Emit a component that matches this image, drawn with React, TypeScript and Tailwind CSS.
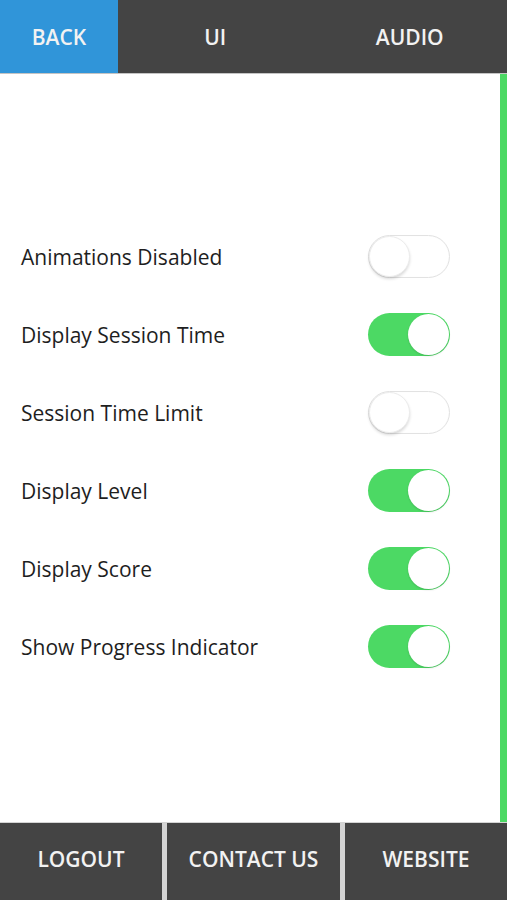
const settings = [
  { label: "Animations Disabled", on: false },
  { label: "Display Session Time", on: true },
  { label: "Session Time Limit", on: false },
  { label: "Display Level", on: true },
  { label: "Display Score", on: true },
  { label: "Show Progress Indicator", on: true },
];

const Toggle = ({ on }: { on: boolean }) => {
  return on ? (
    <div className="w-[82px] h-[43px] rounded-full bg-[#4cd964] flex items-center justify-end p-[1px]">
      <div className="w-[41px] h-[41px] rounded-full bg-white shadow-[0_1px_2px_rgba(0,0,0,0.15)]" />
    </div>
  ) : (
    <div className="w-[82px] h-[43px] rounded-full bg-white border border-[#e2e2e2] flex items-center justify-start shadow-[inset_0_0_1px_rgba(0,0,0,0.05)]">
      <div className="w-[41px] h-[41px] rounded-full bg-white shadow-[0_2px_3px_rgba(0,0,0,0.15)] border border-[#ececec]" />
    </div>
  );
};

const App = () => {
  return (
    <div
      className="w-[507px] h-[900px] flex flex-col bg-white overflow-hidden"
      style={{ fontFamily: '"Open Sans", "Noto Sans", sans-serif' }}
    >
      {/* Header tabs */}
      <div className="flex h-[74px] bg-[#444444] border-b border-[#c4c4c4] text-[#f2f2f2] text-[21px] font-semibold">
        <div className="w-[118px] bg-[#3095d9] flex items-center justify-center pt-[3px]">BACK</div>
        <div className="flex-1 flex items-center justify-center pt-[3px]">UI</div>
        <div className="flex-1 flex items-center justify-center pt-[3px]">AUDIO</div>
      </div>

      {/* Settings */}
      <div className="flex-1 flex">
        <div className="flex-1 flex flex-col pt-[143px]">
          {settings.map((s) => (
            <div key={s.label} className="h-[78px] flex items-center justify-between pl-[21px] pr-[50px]">
              <span className="text-[21px] text-[#1e1e1e] pt-[3px]">{s.label}</span>
              <Toggle on={s.on} />
            </div>
          ))}
        </div>
        <div className="w-[7px] bg-[#4cd964]" />
      </div>

      {/* Footer buttons */}
      <div className="flex h-[78px] gap-[5px] bg-[#d4d4d4] pt-[1px] text-[#f2f2f2] text-[21px] font-semibold">
        <div className="w-[162px] bg-[#444444] flex items-center justify-center pb-[3px]">LOGOUT</div>
        <div className="flex-1 bg-[#444444] flex items-center justify-center pb-[3px]">CONTACT US</div>
        <div className="w-[162px] bg-[#444444] flex items-center justify-center pb-[3px]">WEBSITE</div>
      </div>
    </div>
  );
};

export default App;
